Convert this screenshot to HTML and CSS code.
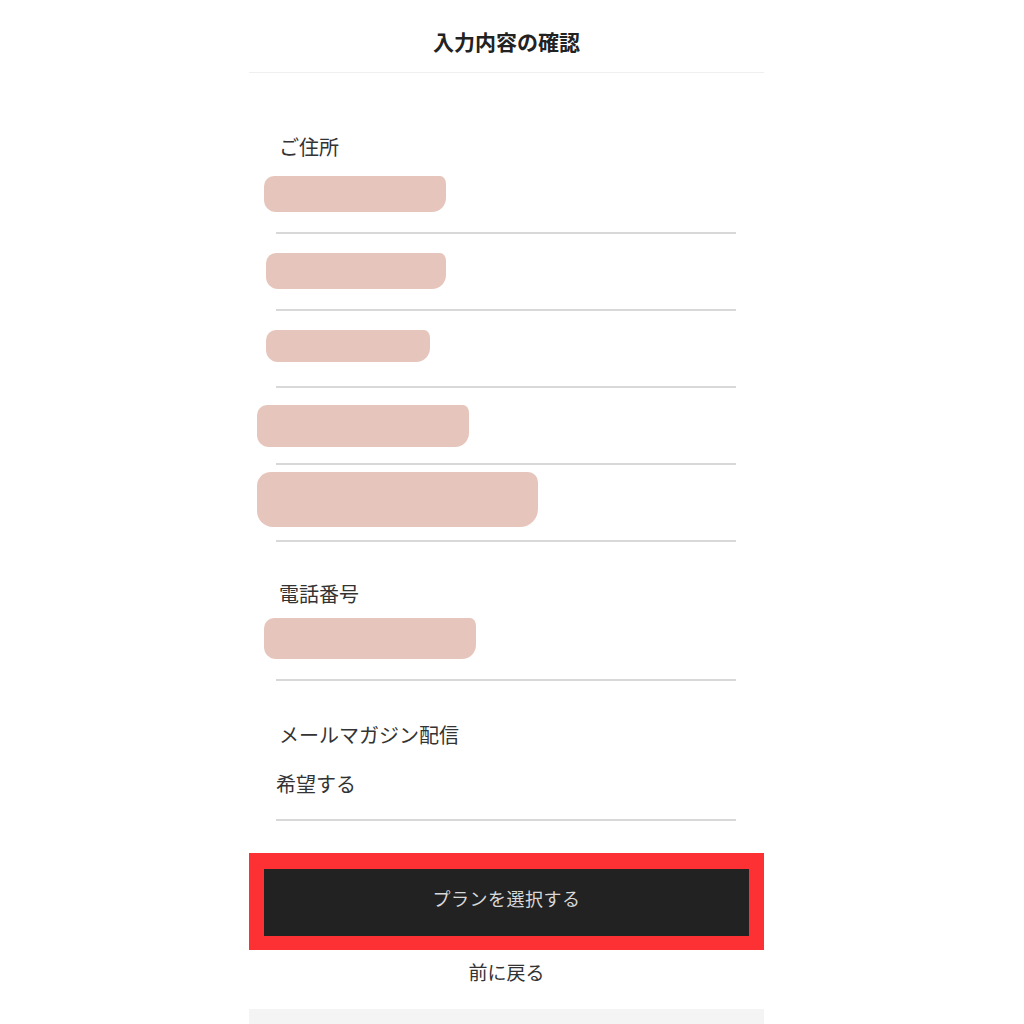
FILE: index.html
```html
<!DOCTYPE html>
<html lang="ja">
<head>
<meta charset="utf-8">
<title>入力内容の確認</title>
<link rel="stylesheet" href="styles.css">
</head>
<body>
<div class="page">
  <header class="header"><h1 class="title">入力内容の確認</h1></header>
  <main class="content">
    <section class="group g-address">
      <div class="label">ご住所</div>
      <div class="row"><span class="blob b1"></span></div>
      <div class="row"><span class="blob b2"></span></div>
      <div class="row"><span class="blob b3"></span></div>
      <div class="row"><span class="blob b4"></span></div>
      <div class="row"><span class="blob b5"></span></div>
    </section>
    <section class="group g-tel">
      <div class="label">電話番号</div>
      <div class="row"><span class="blob b6"></span></div>
    </section>
    <section class="group g-mail">
      <div class="label">メールマガジン配信</div>
      <div class="row text-row"><span class="value">希望する</span></div>
    </section>
  </main>
  <div class="actions">
    <button class="primary">プランを選択する</button>
    <a class="back">前に戻る</a>
  </div>
  <div class="footer-band"></div>
</div>
</body>
</html>
```

FILE: styles.css
```css
html, body {
  margin: 0;
  padding: 0;
  background: #ffffff;
}
body {
  font-family: "Noto Sans CJK JP", "Noto Sans", sans-serif;
  color: #333333;
}
.page {
  width: 515px;
  margin-left: 249px;
}
.header {
  height: 72px;
  border-bottom: 1px solid #efefef;
  box-sizing: content-box;
  display: flex;
  justify-content: center;
}
.title {
  margin: 0;
  padding-top: 28px;
  font-size: 21px;
  line-height: 26px;
  font-weight: 700;
  color: #222222;
}
.content {
  padding: 0 28px 0 27px;
}
.group {
  display: flex;
  flex-direction: column;
}
.g-address { margin-top: 64px; }
.g-tel { margin-top: 42px; }
.g-mail { margin-top: 44px; }
.label {
  font-size: 20px;
  line-height: 20px;
  padding-left: 3px;
  color: #333333;
}
.row {
  height: 75px;
  border-bottom: 2px solid #d8d8d8;
  display: flex;
  align-items: center;
}
.text-row {
  height: 74px;
}
.value {
  font-size: 20px;
  line-height: 20px;
  color: #333333;
  margin-top: 4px;
}
.blob {
  display: block;
  background: #e6c6bc;
  border-radius: 10px 6px 14px 12px / 10px 8px 14px 12px;
}
.b1 { width: 182px; height: 36px; margin-left: -12px; margin-top: -1px; }
.b2 { width: 180px; height: 36px; margin-left: -10px; margin-top: -1px; }
.b3 { width: 164px; height: 32px; margin-left: -10px; margin-top: -6px; }
.b4 { width: 212px; height: 42px; margin-left: -19px; margin-top: 0px; }
.b5 { width: 281px; height: 55px; margin-left: -19px; margin-top: -7px; border-radius: 14px 10px 18px 16px; }
.b6 { width: 212px; height: 41px; margin-left: -12px; margin-top: -7px; }
.actions {
  margin-top: 32px;
  display: flex;
  flex-direction: column;
  align-items: center;
}
.primary {
  width: 515px;
  height: 97px;
  box-sizing: border-box;
  background: #222222;
  border-style: solid;
  border-color: #fd3133;
  border-width: 16px 15px 14px 15px;
  color: #d8d8d8;
  font-family: "Noto Sans CJK JP", "Noto Sans", sans-serif;
  font-size: 18px;
  line-height: 24px;
  padding: 0 0 10px 0;
  letter-spacing: 0.5px;
}
.back {
  margin-top: 12px;
  font-size: 19px;
  line-height: 20px;
  color: #333333;
}
.footer-band {
  margin-top: 27px;
  height: 20px;
  background: #f4f4f4;
}
```
